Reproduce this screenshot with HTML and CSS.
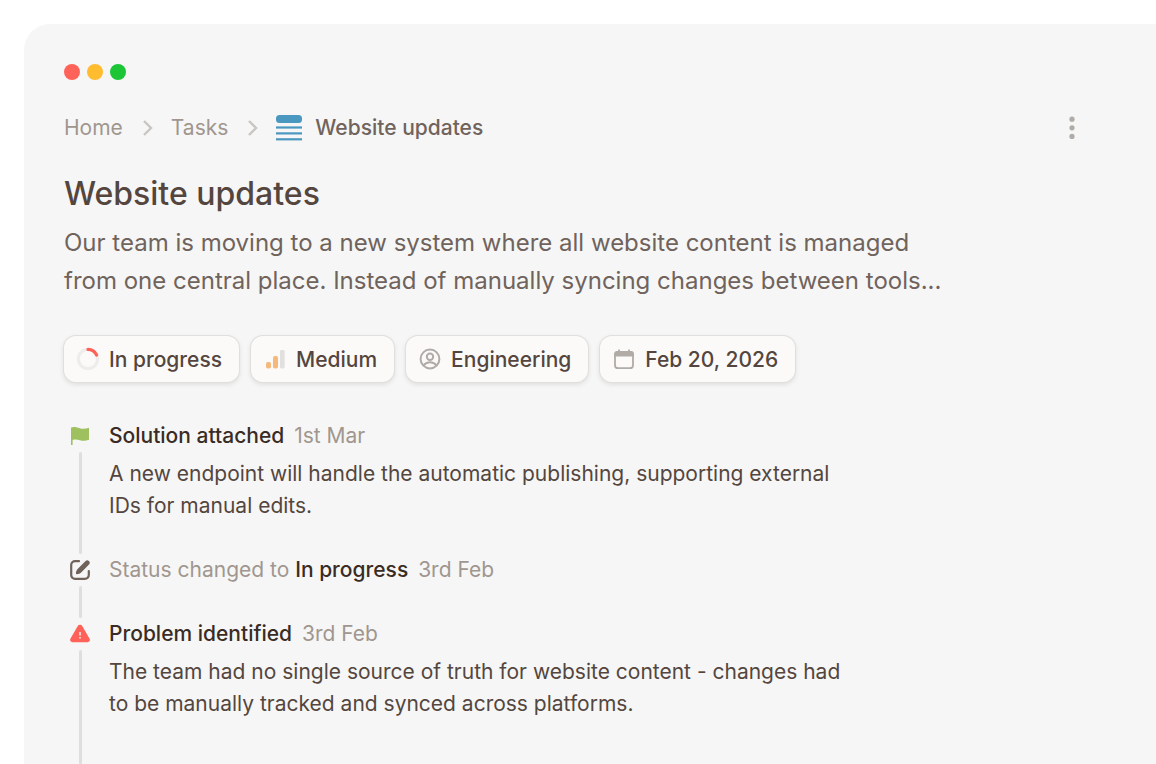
FILE: index.html
```html
<!DOCTYPE html>
<html lang="en">
  <head>
    <meta charset="UTF-8" />
    <meta name="viewport" content="width=device-width, initial-scale=1.0" />
    <title>Website updates</title>
    <link rel="stylesheet" href="styles.css">
  </head>
  <body>
    <main class="window">
      <div class="dots">
        <span class="dot red"></span>
        <span class="dot yellow"></span>
        <span class="dot green"></span>
      </div>

      <header class="topbar">
        <nav class="breadcrumb" aria-label="Breadcrumb">
          <a href="#">Home</a>
          <svg class="chevron" width="12" height="18" viewBox="0 0 12 18"><path d="M3 2l7 7-7 7" /></svg>
          <a href="#">Tasks</a>
          <svg class="chevron" width="12" height="18" viewBox="0 0 12 18"><path d="M3 2l7 7-7 7" /></svg>
          <a href="#" class="current">
            <svg width="26" height="26" viewBox="0 0 26 26" fill="#4a98c0">
              <rect width="26" height="8" rx="3.5" />
              <rect y="11.4" width="26" height="2.2" />
              <rect y="17.3" width="26" height="2.2" />
              <rect y="23.2" width="26" height="2.2" />
            </svg>
            Website updates
          </a>
        </nav>
        <button class="more" aria-label="More options">
          <svg width="24" height="24" viewBox="0 0 24 24" fill="#b0aba7">
            <circle cx="12" cy="3.2" r="2.6" />
            <circle cx="12" cy="11.8" r="2.6" />
            <circle cx="12" cy="20.4" r="2.6" />
          </svg>
        </button>
      </header>

      <h1>Website updates</h1>
      <p class="description">Our team is moving to a new system where all website content is managed from one central place. Instead of manually syncing changes between tools...</p>

      <div class="chips">
        <button class="chip">
          <svg width="24" height="24" viewBox="0 0 24 24" fill="none" stroke-width="3.2">
            <circle cx="12" cy="12" r="9.6" stroke="#eeedec" />
            <path d="M12 2.4A9.6 9.6 0 0 1 20.6 8" stroke="#ff6259" stroke-linecap="round" />
          </svg>
          In progress
        </button>
        <button class="chip">
          <svg width="24" height="24" viewBox="0 0 24 24">
            <rect x="3" y="15" width="5" height="6.5" rx="1.8" fill="#f6b97c" />
            <rect x="10" y="9" width="5" height="12.5" rx="1.8" fill="#f6b97c" />
            <rect x="17" y="3" width="4.6" height="18.5" rx="1.4" fill="#e2e0de" />
          </svg>
          Medium
        </button>
        <button class="chip">
          <svg width="24" height="24" viewBox="0 0 24 24" fill="none" stroke="#b1aba7" stroke-width="2">
            <circle cx="12" cy="12" r="9.4" />
            <circle cx="12" cy="9.8" r="3.2" />
            <path d="M5.6 18.4c1.6-2.2 3.8-3.2 6.4-3.2s4.800 1 6.400 3.200" />
          </svg>
          Engineering
        </button>
        <button class="chip">
          <svg width="24" height="24" viewBox="0 0 24 24" fill="none" stroke="#b1aba7" stroke-width="1.800">
            <rect x="3" y="5" width="18" height="16.200" rx="3" />
            <path d="M3 8.600V7a2 2 0 0 1 2-2h14a2 2 0 0 1 2 2v1.600z" fill="#b1aba7" />
            <path d="M7 2.400V6M17 2.400V6" />
          </svg>
          Feb 20, 2026
        </button>
      </div>

      <ol class="timeline">
        <li class="event">
          <div class="rail">
            <svg width="20" height="20" viewBox="0 0 20 20" fill="#9fc05f">
              <path d="M1 1.400h.8c3-1 5 0 8 .9s6 .6 9.200-.5v12c-3 1.200-6 1.400-9 .5s-5-.9-7.400-.3V19H1z" />
            </svg>
          </div>
          <div class="content">
            <h2><strong>Solution attached</strong> <time>1st Mar</time></h2>
            <p>A new endpoint will handle the automatic publishing, supporting external IDs for manual edits.</p>
          </div>
        </li>
        <li class="event">
          <div class="rail">
            <svg width="20" height="20" viewBox="0 0 20 20" fill="none" stroke="#70635c" stroke-width="2.200" stroke-linecap="round">
              <path d="M9 1.200H5A3.800 3.800 0 0 0 1.200 5v10A3.800 3.800 0 0 0 5 18.800h10a3.800 3.800 0 0 0 3.800-3.800v-4" />
              <path d="M15.600.9a2.500 2.500 0 0 1 3.600 3.400L11.200 12.500c-1.300 1.200-3 1.800-5.200 1.600-.2-2 .4-3.800 1.600-5.100z" fill="#70635c" stroke="none" />
            </svg>
          </div>
          <div class="content">
            <h2>Status changed to <strong>In progress</strong> <time>3rd Feb</time></h2>
          </div>
        </li>
        <li class="event">
          <div class="rail">
            <svg width="20" height="20" viewBox="0 0 20 20">
              <path d="M7.600 2.200a2.700 2.700 0 0 1 4.800 0l7.200 12.600a2.300 2.300 0 0 1-2 3.400H2.400a2.300 2.300 0 0 1-2-3.400z" fill="#ff6259" />
              <path d="M10 8v3.600M10 13v1.600" stroke="#fbd9d6" stroke-width="1.800" />
            </svg>
          </div>
          <div class="content">
            <h2><strong>Problem identified</strong> <time>3rd Feb</time></h2>
            <p>The team had no single source of truth for website content - changes had to be manually tracked and synced across platforms.</p>
          </div>
        </li>
      </ol>
    </main>
  </body>
</html>
```
FILE: styles.css
```css
* {
  margin: 0;
  padding: 0;
  box-sizing: border-box;
}
body {
  font-family: Inter, "Liberation Sans", sans-serif;
  background-color: #ffffff;
  color: #54463e;
  display: flex;
  min-height: 100vh;
  padding: 24px 0 0 24px;
}
a {
  color: inherit;
  text-decoration: none;
}
button {
  font: inherit;
  color: inherit;
  border: none;
  background: none;
  cursor: pointer;
}
svg {
  flex-shrink: 0;
}
.window {
  flex: 1;
  display: flex;
  flex-direction: column;
  background-color: #f6f6f6;
  border-top-left-radius: 26px;
  padding: 40px 72px 0 40px;
}
.dots {
  display: flex;
  gap: 7px;
}
.dot {
  width: 16px;
  height: 16px;
  border-radius: 50%;
}
.red {
  background-color: #ff6259;
}
.yellow {
  background-color: #ffbc2e;
}
.green {
  background-color: #1bc536;
}
.topbar {
  display: flex;
  justify-content: space-between;
  align-items: center;
  margin-top: 32px;
}
.breadcrumb {
  display: flex;
  align-items: center;
  gap: 18px;
  font-size: 21px;
  line-height: 32px;
  color: #a0968f;
}
.chevron {
  fill: none;
  stroke: #c9c5c2;
  stroke-width: 2.4;
}
.current {
  display: flex;
  align-items: center;
  gap: 13px;
  font-weight: 500;
  color: #70635c;
}
.more {
  display: flex;
}
h1 {
  margin-top: 28px;
  font-size: 32px;
  font-weight: 500;
  line-height: 44px;
}
.description {
  max-width: 890px;
  margin-top: 8px;
  font-size: 24px;
  line-height: 38px;
  color: #70635c;
}
.chips {
  display: flex;
  flex-wrap: wrap;
  gap: 12px;
  margin-top: 36px;
}
.chip {
  display: flex;
  align-items: center;
  gap: 9px;
  height: 46px;
  padding: 0 17px 0 12px;
  font-size: 21px;
  font-weight: 500;
  background-color: #fbfaf9;
  border-radius: 12px;
  box-shadow: 0 0 0 1px #e1dfdd, 0 2px 4px 1px rgba(84, 70, 62, 0.12);
}
.timeline {
  flex: 1;
  display: flex;
  flex-direction: column;
  list-style: none;
  margin-top: 38px;
  font-size: 21px;
  line-height: 32px;
}
.event {
  display: flex;
  gap: 13px;
}
.event:last-child {
  flex: 1;
}
.rail {
  display: flex;
  flex-direction: column;
  align-items: center;
  width: 32px;
  padding-top: 6px;
}
.rail::after {
  content: "";
  flex: 1;
  width: 3px;
  margin-top: 6px;
  border-radius: 2px;
  background-color: #e0dedd;
}
.content {
  max-width: 740px;
  padding-bottom: 32px;
}
.event:last-child .content {
  padding-bottom: 0;
}
h2 {
  font-size: 21px;
  font-weight: 400;
  color: #a0968f;
}
h2 strong {
  font-weight: 500;
  color: #3a2c24;
}
time {
  margin-left: 4px;
}
.content p {
  margin-top: 6px;
}
```
